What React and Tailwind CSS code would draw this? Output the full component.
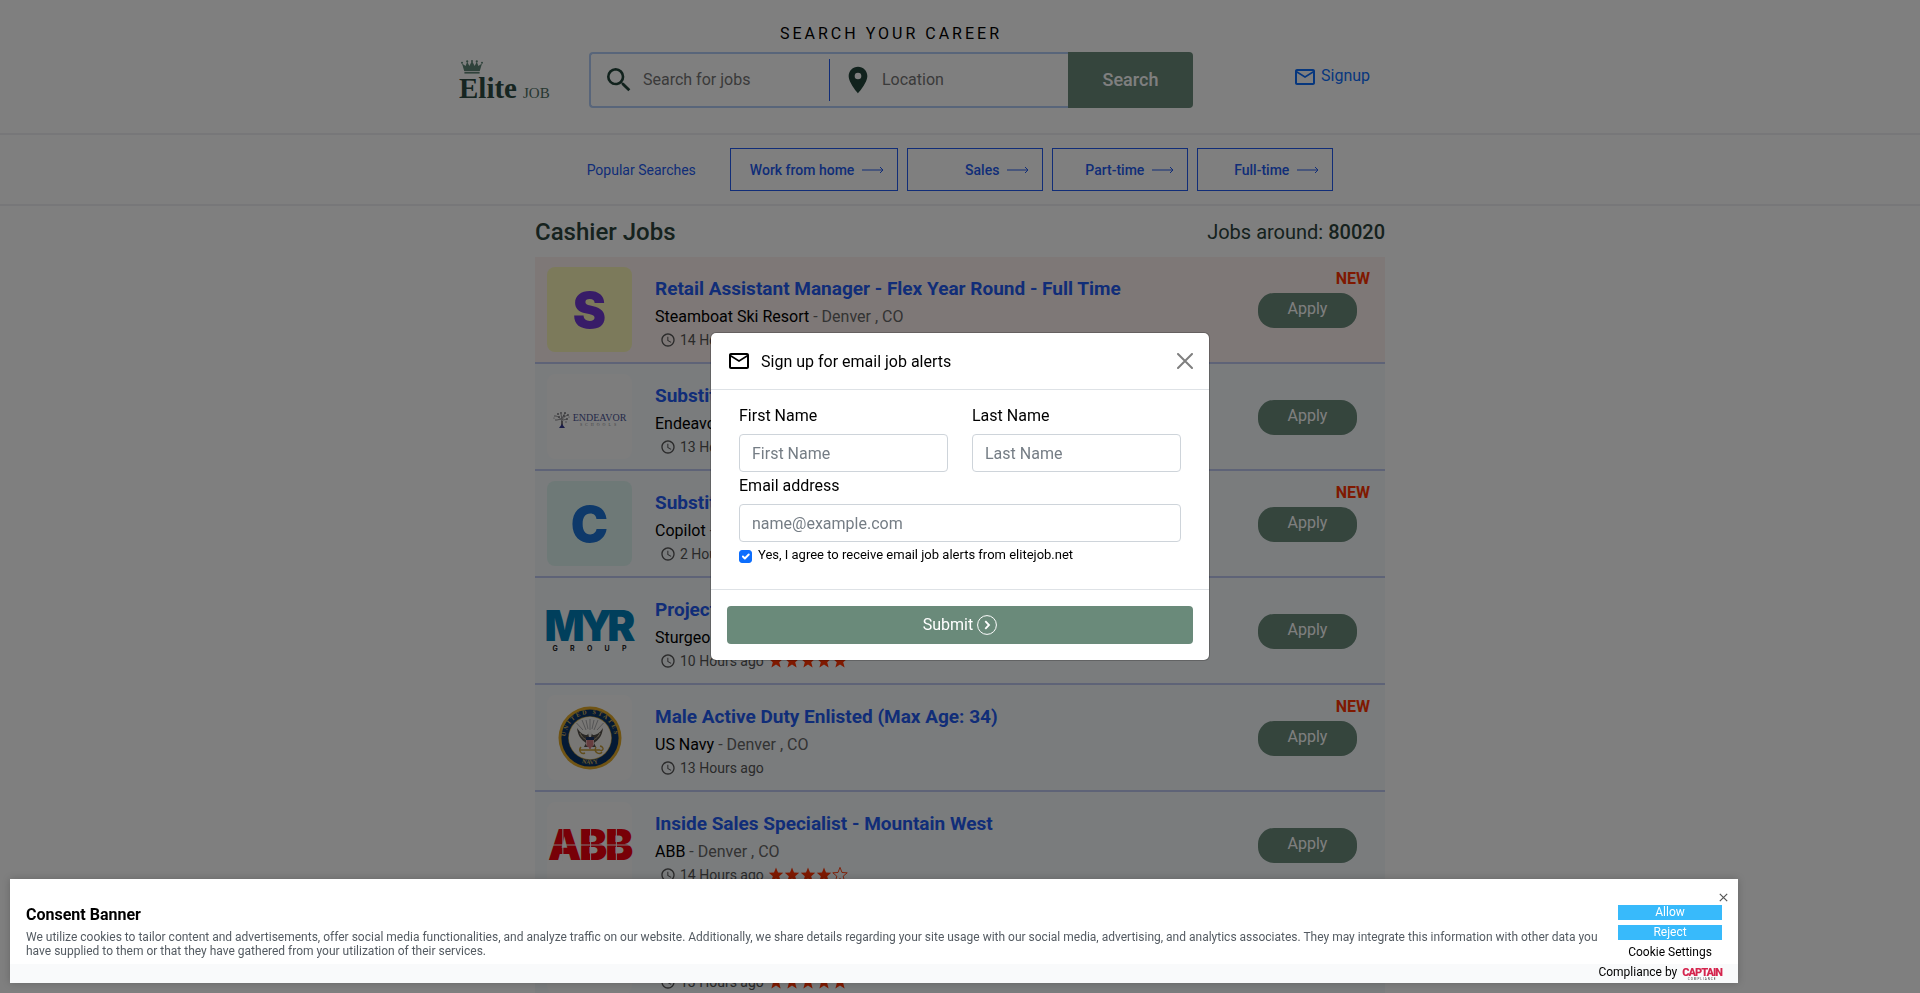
import React from "react";
import { MdSearch, MdLocationOn, MdOutlineEmail, MdAccessTime } from "react-icons/md";

const popular = [
  { label: "Work from home" },
  { label: "Sales" },
  { label: "Part-time" },
  { label: "Full-time" },
];

const jobs = [
  { title: "Retail Assistant Manager - Flex Year Round - Full Time", company: "Steamboat Ski Resort", time: "14 Hours ago", isNew: true, featured: true, logo: "steamboat" },
  { title: "Substitute Teacher", company: "Endeavor Schools", time: "13 Hours ago", logo: "endeavor" },
  { title: "Substitute Teacher", company: "Copilot", time: "2 Hours ago", isNew: true, logo: "copilot" },
  { title: "Project Manager", company: "Sturgeon Electric", time: "10 Hours ago", rating: 5, logo: "myr" },
  { title: "Male Active Duty Enlisted (Max Age: 34)", company: "US Navy", time: "13 Hours ago", isNew: true, logo: "navy" },
  { title: "Inside Sales Specialist - Mountain West", company: "ABB", time: "14 Hours ago", rating: 4, logo: "abb" },
  { title: "Sales Associate", company: "Sears", time: "13 Hours ago", rating: 5, logo: "sears" },
];

function Brand() {
  return (
    <a href="#" className="flex w-[90px] flex-col text-[#2c4a42]" aria-label="Elite Job">
      <svg viewBox="0 0 22 14" className="ml-0.5 h-[14px] w-[22px]" fill="#5f8576" aria-hidden="true">
        <path d="M3.2 11 L1 3.4 L4.6 6 L6.2 1.8 L8.4 6 L11 .8 L13.6 6 L15.8 1.8 L17.4 6 L21 3.4 L18.8 11 Z" />
        <path d="M3.4 11.8 H18.6 V13.6 H3.4 Z" />
        <circle cx="1" cy="2.8" r="1" />
        <circle cx="6.2" cy="1.4" r="1.1" />
        <circle cx="11" cy="1" r="1" />
        <circle cx="15.8" cy="1.4" r="1.1" />
        <circle cx="21" cy="2.8" r="1" />
      </svg>
      <span className="flex items-baseline gap-1.5 font-['Liberation_Serif',serif] leading-7">
        <span className="text-[29px] font-bold">Elite</span>
        <span className="text-[15px] text-[#4d6e62]">JOB</span>
      </span>
    </a>
  );
}

function Arrow() {
  return (
    <svg viewBox="0 0 22 8" className="h-2 w-[22px]" fill="none" stroke="currentColor" strokeWidth="1" aria-hidden="true">
      <path d="M0 4 H21 M18 1 L21 4 L18 7" />
    </svg>
  );
}

function Star({ filled }) {
  return (
    <svg viewBox="0 0 16 16" className="size-4" fill={filled ? "currentColor" : "none"} stroke="currentColor" strokeWidth={filled ? "0" : "0.9"} aria-hidden="true">
      <path d="M8 .4 L10 5.5 L15.2 5.8 L11.2 9.2 L12.6 14.6 L8 11.6 L3.4 14.6 L4.8 9.2 L.8 5.8 L6 5.5 Z" />
    </svg>
  );
}

function NavySeal() {
  return (
    <svg viewBox="0 0 64 64" className="size-16" aria-hidden="true">
      <defs>
        <path id="seal-top" d="M10.5 44 A24.5 24.5 0 1 1 53.5 44" />
        <path id="seal-bottom" d="M16 53 A27.5 27.5 0 0 0 48 53" />
      </defs>
      <circle cx="32" cy="32" r="31.5" fill="#e0a829" />
      <circle cx="32" cy="32" r="28.6" fill="#0b3468" />
      <circle cx="32" cy="32" r="21.8" fill="#c9a548" />
      <circle cx="32" cy="32" r="21.2" fill="#f0eeea" />
      <g stroke="#8c8c90" strokeWidth=".7">
        <path d="M32 24 V13 M28 24 L24 14 M36 24 L40 14 M25 24 L18.5 17 M39 24 L45.5 17 M30 23 L28 14 M34 23 L36 14" />
      </g>
      <path d="M19 22 C20 31 24 34 28 37 L26 41 H38 L36 37 C40 34 44 31 45 22 C41 28 38 29 35 29 L32 26 L29 29 C26 29 23 28 19 22 Z" fill="#55504a" />
      <path d="M22 27 C24 32 27 33 29 34 M42 27 C40 32 37 33 35 34" stroke="#c5b9a0" strokeWidth="1" fill="none" />
      <path d="M30 27 C30 25 34 25 34 27 L33 31 H31 Z" fill="#e9e7e2" />
      <path d="M28 31 H36 V34 H28 Z" fill="#1f3766" />
      <path d="M28 34 H36 V39 L32 43 L28 39 Z" fill="#e2b4b4" />
      <path d="M30 34 V41 M32 34 V43 M34 34 V41" stroke="#b83a44" strokeWidth=".9" />
      <path d="M23 41 C20 44 23 49 27 47 M22 44 H42 M42 40 C47 41 45 46 42 44 M38 41 C35 47 42 49 44 46" stroke="#c39a35" strokeWidth="1.4" fill="none" />
      <g fill="#d8b65a" fontFamily="Liberation Serif, serif" fontSize="6" fontWeight="700">
        <text>
          <textPath href="#seal-top" startOffset="50%" textAnchor="middle" letterSpacing="2">UNITED STATES</textPath>
        </text>
        <text>
          <textPath href="#seal-bottom" startOffset="50%" textAnchor="middle">NAVY</textPath>
        </text>
      </g>
    </svg>
  );
}

function EndeavorTree() {
  return (
    <svg viewBox="0 0 18 18" className="size-[18px]" fill="none" aria-hidden="true">
      <path d="M9 12 C9 8 6 6 3 5 M9 11 C9 7 12 5 15 4 M9 9 L8 3 M8.5 8 L12 2 M8 8 L4 9 M10 9 L14 8" stroke="#77777c" strokeWidth=".8" />
      <g fill="#77777c">
        <circle cx="2" cy="5" r=".8" /><circle cx="5" cy="3" r="1" /><circle cx="8" cy="2" r=".9" /><circle cx="12" cy="2" r="1" />
        <circle cx="15" cy="4" r=".9" /><circle cx="3" cy="9" r=".8" /><circle cx="14" cy="8" r="1" /><circle cx="6" cy="6" r="1" />
        <circle cx="11" cy="5" r="1" /><circle cx="13" cy="11" r=".7" /><circle cx="1" cy="7" r=".6" /><circle cx="16" cy="6" r=".6" />
      </g>
      <path d="M8.3 10 H9.7 L10 14 H8 Z" fill="#6c6870" />
      <path d="M6 17 L9 13 L12 17 Z" fill="#33388f" />
    </svg>
  );
}

function JobLogo({ kind }) {
  const tile = "flex size-[85px] shrink-0 flex-col items-center justify-center rounded-lg ";
  if (kind === "steamboat")
    return <div className={tile + "bg-[#f8f5b6] font-['Inter',sans-serif] text-[50px] leading-none font-black text-[#7038d0]"}>S</div>;
  if (kind === "copilot")
    return <div className={tile + "bg-[#dcf3ee] font-['Inter',sans-serif] text-[50px] leading-none font-black text-[#1c72d4]"}>C</div>;
  if (kind === "endeavor")
    return (
      <div className={tile + "bg-[#fafafa]"}>
        <div className="flex items-center gap-0.5 pt-1.5">
          <EndeavorTree />
          <div className="flex flex-col items-center font-['Liberation_Serif',serif] text-[#4b5495]">
            <span className="text-[10px] leading-[10px]">ENDEAVOR</span>
            <span className="text-[4px] leading-1 tracking-[3px] text-[#85858a]">SCHOOLS</span>
          </div>
        </div>
      </div>
    );
  if (kind === "myr")
    return (
      <div className={tile + "gap-1"}>
        <span className="pr-1 font-['Inter',sans-serif] text-[42px] leading-[31px] font-black tracking-[-5px] text-[#007fb8]">MYR</span>
        <span className="flex w-[74px] justify-between font-['Inter',sans-serif] text-[7px] leading-[7px] font-bold text-[#222]">
          <span>G</span><span>R</span><span>O</span><span>U</span><span>P</span>
        </span>
      </div>
    );
  if (kind === "navy")
    return <div className={tile + "bg-[#fafafa]"}><NavySeal /></div>;
  if (kind === "abb")
    return (
      <div className={tile + "bg-[#fafafa]"}>
        <div className="relative font-['Inter',sans-serif] text-[42px] leading-[32px] font-black tracking-tighter text-[#f0000f]">
          ABB
          <svg viewBox="0 0 84 32" preserveAspectRatio="none" className="absolute inset-0 size-full" stroke="#fafafa" strokeWidth="1" aria-hidden="true">
            <path d="M0 16 H84 M15 0 V32 M43 0 V32 M69 0 V32" />
          </svg>
        </div>
      </div>
    );
  return (
    <div className={tile + "bg-[#fafafa]"}>
      <span className="pt-12 font-['Inter',sans-serif] text-[19px] leading-none font-bold text-[#777]">SEARS</span>
    </div>
  );
}

function JobRow({ job }) {
  return (
    <li className={"flex h-[107px] border-b-2 border-[#bcc6ee] px-3 " + (job.featured ? "bg-[#fdf1ef]" : "bg-[#f4f8fb]")}>
      <div className="flex items-center">
        <JobLogo kind={job.logo} />
      </div>
      <div className="min-w-0 flex-1 pt-4 pl-[23px]">
        <h2 className="truncate text-[19px] leading-8 font-bold text-[#235bf0]">
          <a href="#">{job.title}</a>
        </h2>
        <p className="leading-6 text-[#666]">
          <span className="text-black">{job.company}</span> - Denver , CO
        </p>
        <p className="flex items-center gap-1 pl-[5px] text-sm leading-[22px] text-[#555]">
          <MdAccessTime className="size-4" aria-hidden="true" />
          {job.time}
          {job.rating && (
            <span className="flex text-[#ff3300]">
              {[1, 2, 3, 4, 5].map((n) => (
                <Star key={n} filled={n <= job.rating} />
              ))}
            </span>
          )}
        </p>
      </div>
      <div className="flex w-[115px] flex-col pt-[11px]">
        <span className="h-[25px] pr-[3px] text-right leading-[22px] font-bold text-[#ff3300]">{job.isNew ? "NEW" : ""}</span>
        <button type="button" className="h-[35px] w-[99px] rounded-2xl bg-[#6a8a7a] pb-1 text-white">Apply</button>
      </div>
    </li>
  );
}

function SearchHeader() {
  return (
    <header className="border-b-2 border-[#eeeef2]">
      <div className="mx-auto flex max-w-[1002px] pt-6 pb-[25px]">
        <div className="pt-9">
          <Brand />
        </div>
        <div className="ml-10 w-[604px] shrink-0">
          <h1 className="pb-1 text-center leading-5 tracking-[3px] text-black">SEARCH YOUR CAREER</h1>
          <form className="mt-1 flex h-14" onSubmit={(e) => e.preventDefault()}>
            <div className="flex min-w-0 flex-1 items-center rounded-l border-2 border-r-0 border-[#b0cbf5]">
              <label className="flex w-[238px] shrink-0 items-center gap-2 pl-3">
                <MdSearch className="size-8 shrink-0 text-[#23443a]" aria-hidden="true" />
                <input type="text" aria-label="Search for jobs" placeholder="Search for jobs" className="min-w-0 flex-1 outline-none placeholder:text-[#757575]" />
              </label>
              <span className="h-[42px] w-px shrink-0 bg-[#235bf0]" />
              <label className="flex min-w-0 flex-1 items-center gap-2 pl-3">
                <MdLocationOn className="size-8 shrink-0 text-[#23443a]" aria-hidden="true" />
                <input type="text" aria-label="Location" placeholder="Location" className="min-w-0 flex-1 outline-none placeholder:text-[#757575]" />
              </label>
            </div>
            <button type="submit" className="w-[125px] shrink-0 rounded-r bg-[#6a8a7a] text-lg font-medium text-white">Search</button>
          </form>
        </div>
        <a href="#" className="ml-[100px] flex items-start gap-1 pt-10 text-[#0d6efd]">
          <MdOutlineEmail className="mt-px size-6" aria-hidden="true" />
          <span className="leading-6">Signup</span>
        </a>
      </div>
    </header>
  );
}

function PopularSearches() {
  return (
    <nav className="flex items-center justify-center border-b-2 border-[#eeeef2] py-[13px] text-sm text-[#235bf0]">
      <span className="mr-[34px]">Popular Searches</span>
      <div className="flex gap-[9px]">
        {popular.map((p) => (
          <a key={p.label} href="#" className="flex h-[43px] min-w-[136px] items-center justify-end gap-2 border border-[#235bf0] pr-[13px] pl-[19px] font-medium">
            {p.label}
            <Arrow />
          </a>
        ))}
      </div>
    </nav>
  );
}

function Field({ id, label, placeholder, type = "text" }) {
  return (
    <div className="flex flex-1 flex-col gap-1.5">
      <label htmlFor={id} className="leading-6">{label}</label>
      <input id={id} type={type} placeholder={placeholder} className="h-[38px] w-full rounded border border-[#ced4da] bg-white px-3 outline-none placeholder:text-[#757d85]" />
    </div>
  );
}

function SignupModal() {
  return (
    <div className="fixed inset-0 flex items-center justify-center bg-black/50">
      <form role="dialog" aria-modal="true" aria-label="Sign up for email job alerts" onSubmit={(e) => e.preventDefault()} className="w-[500px] rounded-md border border-black/20 bg-white bg-clip-padding text-black">
        <div className="flex h-[57px] items-center border-b border-[#dee2e6] px-4">
          <MdOutlineEmail className="size-6" aria-hidden="true" />
          <span className="flex-1 pt-0.5 pl-2.5 leading-6">Sign up for email job alerts</span>
          <button type="button" aria-label="Close" className="text-[#7f7f7f]">
            <svg viewBox="0 0 16 16" className="size-4" fill="none" stroke="currentColor" strokeWidth="2" strokeLinecap="round" aria-hidden="true">
              <path d="M1 1 L15 15 M15 1 L1 15" />
            </svg>
          </button>
        </div>
        <div className="flex flex-col gap-0.5 px-7 pt-3.5 pb-6">
          <div className="flex gap-6">
            <Field id="first" label="First Name" placeholder="First Name" />
            <Field id="last" label="Last Name" placeholder="Last Name" />
          </div>
          <Field id="email" label="Email address" placeholder="name@example.com" type="email" />
          <div className="flex items-center gap-1.5 pt-px">
            <span className="mt-0.5 grid size-[13px]">
              <input id="agree" type="checkbox" defaultChecked className="peer col-start-1 row-start-1 size-[13px] appearance-none rounded-[3px] border border-[#bfbfbf] checked:border-[#0d6efd] checked:bg-[#0d6efd]" />
              <svg viewBox="0 0 20 20" className="pointer-events-none invisible col-start-1 row-start-1 size-[13px] peer-checked:visible" fill="none" stroke="#fff" strokeWidth="3" strokeLinecap="round" strokeLinejoin="round" aria-hidden="true">
                <path d="M6 10 l3 3 l6-6" />
              </svg>
            </span>
            <label htmlFor="agree" className="text-[13px] leading-5">Yes, I agree to receive email job alerts from elitejob.net</label>
          </div>
        </div>
        <div className="border-t border-[#dee2e6] p-4">
          <button type="submit" className="flex h-[38px] w-full items-center justify-center gap-1 rounded bg-[#6a8a7a] text-white">
            Submit
            <svg viewBox="0 0 20 20" className="size-5" fill="none" stroke="currentColor" aria-hidden="true">
              <circle cx="10" cy="10" r="9.4" strokeWidth="1" />
              <path d="M8.3 6.2 L12 10 L8.3 13.8" strokeWidth="1.8" />
            </svg>
          </button>
        </div>
      </form>
    </div>
  );
}

function ConsentBanner() {
  return (
    <aside className="fixed bottom-2.5 left-2.5 flex h-[104px] w-[90%] flex-col bg-white shadow-[0_0_8px_rgba(0,0,0,0.2)]">
      <div className="flex h-[85px] pl-4 text-xs">
        <div className="min-w-0 flex-1 pt-[26px]">
          <h2 className="pb-[5px] text-base leading-5 font-bold text-black">Consent Banner</h2>
          <p className="leading-[14px] text-[#545b62]">
            We utilize cookies to tailor content and advertisements, offer social media functionalities, and analyze traffic on our website. Additionally, we share details regarding your site usage with our social media, advertising, and analytics associates. They may integrate this information with other data you have supplied to them or that they have gathered from your utilization of their services.
          </p>
        </div>
        <div className="flex w-[120px] flex-col pt-3.5 pr-4">
          <button type="button" aria-label="Dismiss" className="-mr-1.5 mb-[3px] self-end text-[#555]">
            <svg viewBox="0 0 9 9" className="size-[9px]" stroke="currentColor" strokeWidth="1.2" aria-hidden="true">
              <path d="M.8 .8 L8.2 8.2 M8.2 .8 L.8 8.2" />
            </svg>
          </button>
          <div className="flex flex-col gap-[5px]">
            <button type="button" className="h-[15px] bg-[#38bafb] leading-[13px] text-white">Allow</button>
            <button type="button" className="h-[15px] bg-[#38bafb] leading-[13px] text-white">Reject</button>
            <button type="button" className="h-3.5 leading-[14px] text-black">Cookie Settings</button>
          </div>
        </div>
      </div>
      <div className="flex flex-1 items-start justify-end gap-[5px] bg-[#f9fafb] pr-4 text-xs leading-[17px] text-black">
        Compliance by
        <span className="flex flex-col items-center pt-[3px] text-[#d5254e]">
          <span className="text-[11px] leading-[11px] font-black tracking-[-1px]">CAPTAIN</span>
          <span className="text-[3px] leading-[3px] tracking-[1px] text-[#333]">COMPLIANCE</span>
        </span>
      </div>
    </aside>
  );
}

export default function App() {
  return (
    <div className="h-screen overflow-hidden bg-white font-['Roboto',sans-serif] text-base">
      <SearchHeader />
      <PopularSearches />
      <main className="mx-auto max-w-[850px]">
        <div className="flex h-[51px] items-center justify-between text-[#2c443c]">
          <h2 className="text-2xl font-medium">Cashier Jobs</h2>
          <p className="text-xl">
            Jobs around: <strong className="font-medium">80020</strong>
          </p>
        </div>
        <ul>
          {jobs.map((job) => (
            <JobRow key={job.logo} job={job} />
          ))}
        </ul>
      </main>
      <SignupModal />
      <ConsentBanner />
    </div>
  );
}
